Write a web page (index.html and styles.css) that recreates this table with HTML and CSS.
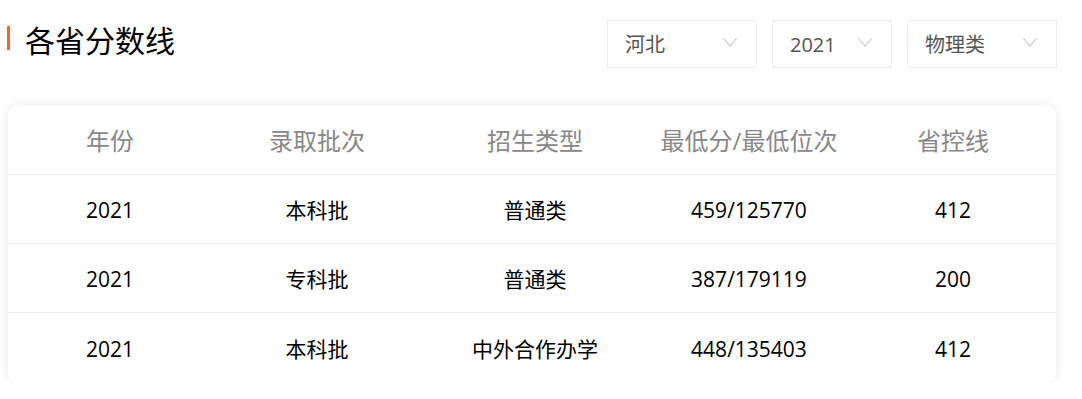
FILE: index.html
```html
<!DOCTYPE html>
<html lang="zh">
<head>
<meta charset="utf-8">
<link rel="stylesheet" href="styles.css">
</head>
<body>
<div class="page">
  <div class="top">
    <h1 class="title">各省分数线</h1>
    <div class="filters">
      <div class="select w150"><span>河北</span><svg class="chev" viewBox="0 0 14 9"><path d="M0.5 0.5 L7 8 L13.5 0.5" /></svg></div>
      <div class="select w120"><span>2021</span><svg class="chev" viewBox="0 0 14 9"><path d="M0.5 0.5 L7 8 L13.5 0.5" /></svg></div>
      <div class="select w150"><span>物理类</span><svg class="chev" viewBox="0 0 14 9"><path d="M0.5 0.5 L7 8 L13.5 0.5" /></svg></div>
    </div>
  </div>
  <div class="card">
    <div class="row head">
      <div>年份</div><div>录取批次</div><div>招生类型</div><div>最低分/最低位次</div><div>省控线</div>
    </div>
    <div class="row">
      <div>2021</div><div>本科批</div><div>普通类</div><div>459/125770</div><div>412</div>
    </div>
    <div class="row">
      <div>2021</div><div>专科批</div><div>普通类</div><div>387/179119</div><div>200</div>
    </div>
    <div class="row last">
      <div>2021</div><div>本科批</div><div>中外合作办学</div><div>448/135403</div><div>412</div>
    </div>
  </div>
</div>
</body>
</html>
```

FILE: styles.css
```css
html, body {
  margin: 0;
  padding: 0;
  background: #fff;
}
body {
  font-family: "Open Sans", "Noto Sans CJK SC", sans-serif;
  color: #000;
}
.page {
  width: 1082px;
}
.top {
  display: flex;
  justify-content: space-between;
  align-items: flex-start;
  padding: 20px 25px 0 7px;
  height: 47px;
}
.title {
  margin: 6px 0 0 0;
  font-size: 30px;
  line-height: 30px;
  font-weight: 400;
  color: #000;
  display: flex;
  align-items: flex-start;
}
.title::before {
  content: "";
  display: block;
  width: 3px;
  height: 24px;
  background: #f5691c;
  margin-right: 15px;
}
.filters {
  display: flex;
  gap: 15px;
}
.select {
  box-sizing: border-box;
  height: 48px;
  border: 1px solid #ececec;
  display: flex;
  align-items: center;
  justify-content: space-between;
  padding: 2px 19px 0 17px;
  font-size: 20px;
  line-height: 24px;
  color: #555;
}
.w150 { width: 150px; }
.w120 { width: 120px; }
.chev {
  width: 14px;
  height: 9px;
  margin-top: -5px;
}
.chev path {
  fill: none;
  stroke: #c2c2c2;
  stroke-width: 1.1;
}
.card {
  margin: 39px 26px 0 8px;
  background: #fff;
  border-radius: 10px;
  box-shadow: 0 0 12px rgba(0, 0, 0, 0.09);
  overflow: hidden;
}
.row {
  display: grid;
  grid-template-columns: 204px 210px 226px 202px 1fr;
  height: 69px;
  padding-top: 2px;
  align-items: center;
  text-align: center;
  border-bottom: 1px solid #ededed;
  box-sizing: border-box;
  font-size: 21px;
  line-height: 26px;
  color: #000;
}
.row.head {
  font-size: 24px;
  color: #888;
}
.row.last {
  border-bottom: none;
}
```
